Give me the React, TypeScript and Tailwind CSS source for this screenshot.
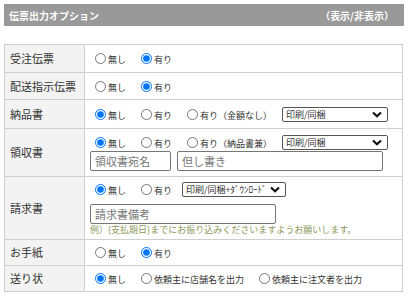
const font = { fontFamily: '"Noto Sans CJK JP", "Noto Sans", sans-serif' };

function Radio({ label, checked }: { label: string; checked?: boolean }) {
  return (
    <label className="inline-flex items-center ml-[5px] mr-[10px] shrink-0">
      <input
        type="radio"
        checked={!!checked}
        readOnly
        className="w-[11px] h-[11px] m-0 mr-[2px] accent-[#0075ff]"
      />
      <span className="text-[9px] leading-[11px] text-[#333] pt-[2px] whitespace-nowrap">{label}</span>
    </label>
  );
}

function FakeSelect({ value, width }: { value: string; width: string }) {
  return (
    <div
      className={`${width} h-[15px] border border-[#555] rounded-[2px] bg-white flex items-center justify-between pl-[3px] pr-[5px] shrink-0`}
    >
      <span className="text-[9px] leading-none text-[#333] whitespace-nowrap">{value}</span>
      <svg width="10" height="7" viewBox="0 0 10 7">
        <path d="M1 1.5 L5 5.2 L9 1.5" fill="none" stroke="#111" strokeWidth="2.2" />
      </svg>
    </div>
  );
}

function TextBox({ placeholder, width }: { placeholder: string; width: string }) {
  return (
    <input
      placeholder={placeholder}
      className={`${width} h-[20px] border border-[#767676] rounded-[2px] px-[4px] text-[11px] text-[#333] placeholder:text-[#757575] bg-white outline-none`}
      style={font}
    />
  );
}

function Row({ label, h, children }: { label: string; h: string; children: React.ReactNode }) {
  return (
    <div className={`flex ${h} border-t border-[#cfcfcf] first:border-t-0`}>
      <div className="w-[80px] shrink-0 bg-[#f2f3f2] border-r border-[#cfcfcf] flex items-center pl-[5px] text-[11px] text-[#333]">
        {label}
      </div>
      <div className="flex-1 pl-[5px] flex flex-col justify-center">{children}</div>
    </div>
  );
}

export default function App() {
  return (
    <div className="w-[408px] h-[296px] bg-white pt-[4px] px-[4px]" style={font}>
      <div className="h-[22px] w-[400px] bg-[#999999] flex items-center justify-between pl-[5px] pr-[10px] text-white text-[10px] font-bold">
        <span>伝票出力オプション</span>
        <span>（表示/非表示）</span>
      </div>

      <div className="mt-[18px] w-[399px] border border-[#cfcfcf]">
        <Row label="受注伝票" h="h-[27px]">
          <div className="flex items-center">
            <Radio label="無し" />
            <Radio label="有り" checked />
          </div>
        </Row>
        <Row label="配送指示伝票" h="h-[27px]">
          <div className="flex items-center">
            <Radio label="無し" />
            <Radio label="有り" checked />
          </div>
        </Row>
        <Row label="納品書" h="h-[29px]">
          <div className="flex items-center">
            <Radio label="無し" checked />
            <Radio label="有り" />
            <Radio label="有り（金額なし）" />
            <FakeSelect value="印刷/同梱" width="w-[106px]" />
          </div>
        </Row>
        <Row label="領収書" h="h-[48px]">
          <div className="flex items-center h-[17px]">
            <Radio label="無し" checked />
            <Radio label="有り" />
            <Radio label="有り（納品書兼）" />
            <FakeSelect value="印刷/同梱" width="w-[106px]" />
          </div>
          <div className="flex gap-[6px]">
            <TextBox placeholder="領収書宛名" width="w-[81px]" />
            <TextBox placeholder="但し書き" width="w-[206px]" />
          </div>
        </Row>
        <Row label="請求書" h="h-[63px]">
          <div className="flex items-center h-[18px]">
            <Radio label="無し" checked />
            <Radio label="有り" />
            <FakeSelect value="印刷/同梱+ﾀﾞｳﾝﾛｰﾄﾞ" width="w-[104px]" />
          </div>
          <div className="mt-[1px]">
            <TextBox placeholder="請求書備考" width="w-[186px]" />
          </div>
          <div className="h-[12px] flex items-center text-[9px] text-[#8c9a5c] whitespace-nowrap">
            例）{'{'}支払期日{'}'}までにお振り込みくださいますようお願いします。
          </div>
        </Row>
        <Row label="お手紙" h="h-[26px]">
          <div className="flex items-center">
            <Radio label="無し" />
            <Radio label="有り" checked />
          </div>
        </Row>
        <Row label="送り状" h="h-[26px]">
          <div className="flex items-center">
            <Radio label="無し" checked />
            <Radio label="依頼主に店舗名を出力" />
            <Radio label="依頼主に注文者を出力" />
          </div>
        </Row>
      </div>
    </div>
  );
}
